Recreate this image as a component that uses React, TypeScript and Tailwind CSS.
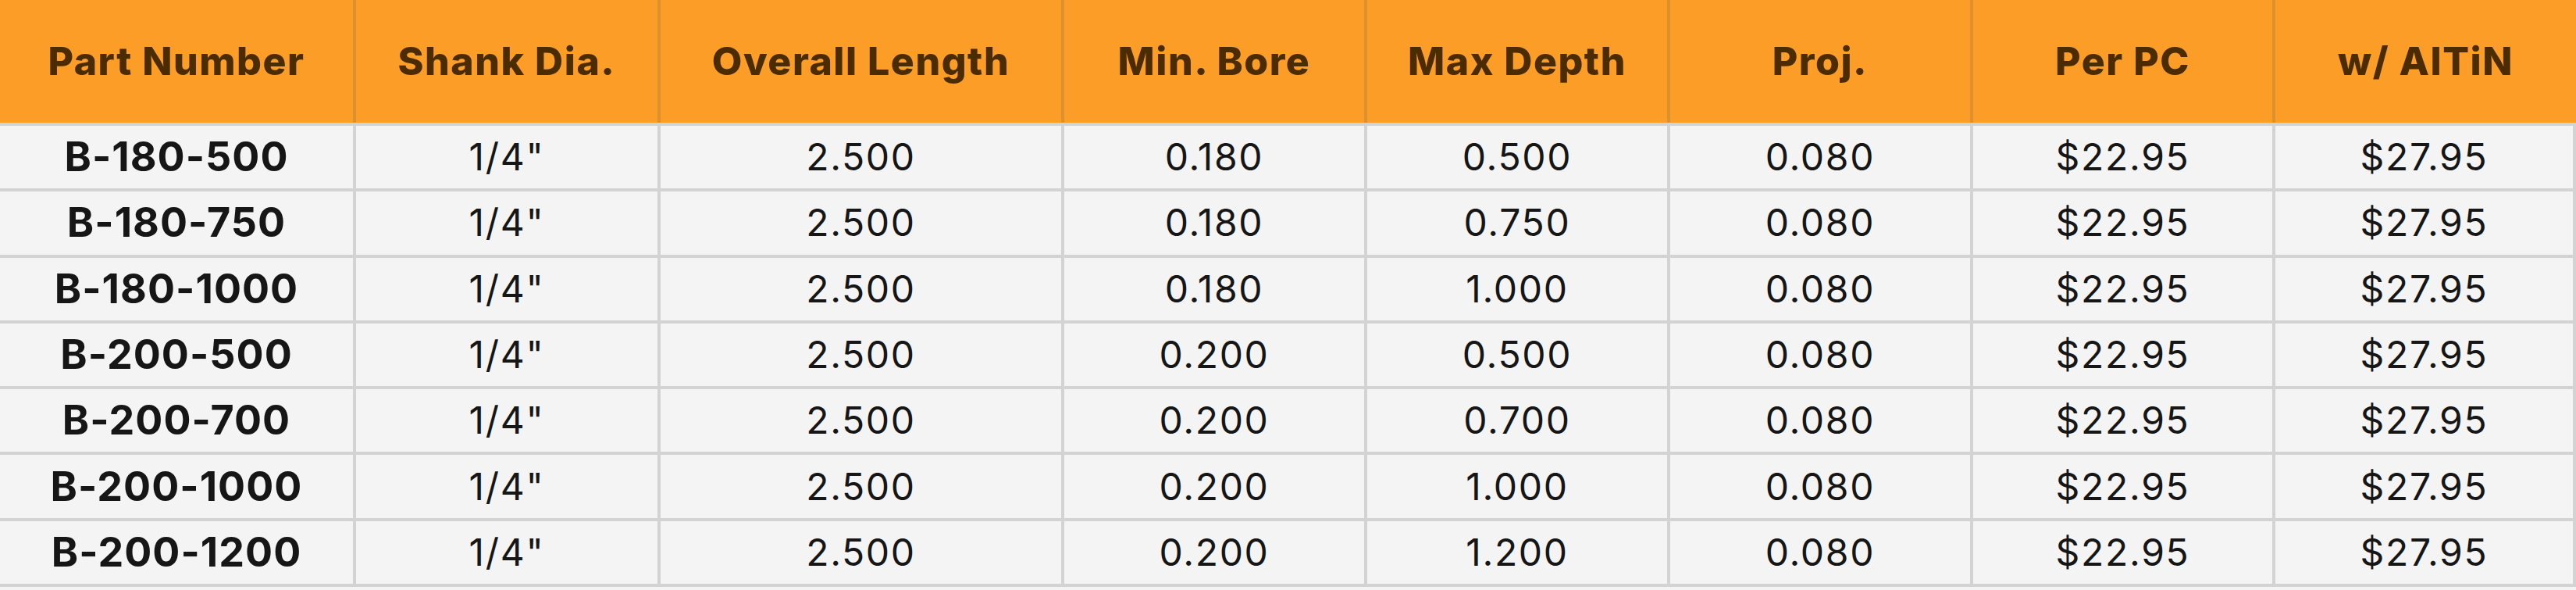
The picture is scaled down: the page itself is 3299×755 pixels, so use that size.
const columns = [
  'Part Number',
  'Shank Dia.',
  'Overall Length',
  'Min. Bore',
  'Max Depth',
  'Proj.',
  'Per PC',
  'w/ AlTiN'
];

const parts = [
  { part: 'B-180-500', bore: '0.180', depth: '0.500' },
  { part: 'B-180-750', bore: '0.180', depth: '0.750' },
  { part: 'B-180-1000', bore: '0.180', depth: '1.000' },
  { part: 'B-200-500', bore: '0.200', depth: '0.500' },
  { part: 'B-200-700', bore: '0.200', depth: '0.700' },
  { part: 'B-200-1000', bore: '0.200', depth: '1.000' },
  { part: 'B-200-1200', bore: '0.200', depth: '1.200' }
];

const gridCols =
  'grid grid-cols-[456px_390px_517px_388px_388px_388px_387px_385px]';

export default function App() {
  return (
    <div className="min-h-screen bg-[#f4f4f4] font-['Inter',sans-serif]">
      <div className="w-[3299px]">
        <div className={`${gridCols} h-[157px] bg-[#fc9d28]`}>
          {columns.map((label, i) => (
            <div
              key={label}
              className={`flex items-center justify-center text-[50px] font-extrabold tracking-[0.03em] text-[#4a2c00] ${
                i < columns.length - 1 ? 'border-r-4 border-[#de902d]' : ''
              }`}
            >
              {label}
            </div>
          ))}
        </div>

        <div className="border-b-4 border-[#d3d3d3]">
          {parts.map((row) => {
            const cells = [
              row.part,
              '1/4"',
              '2.500',
              row.bore,
              row.depth,
              '0.080',
              '$22.95',
              '$27.95'
            ];
            return (
              <div
                key={row.part}
                className={`${gridCols} h-[84.3px] border-t-4 border-[#d3d3d3] bg-[#f4f4f4]`}
              >
                {cells.map((value, i) => (
                  <div
                    key={i}
                    className={`flex items-center justify-center border-r-4 border-[#d3d3d3] text-[#161616] ${
                      i === 0
                        ? 'text-[52px] font-bold tracking-[0.02em]'
                        : 'text-[48px] font-normal tracking-[0.035em]'
                    }`}
                  >
                    {value}
                  </div>
                ))}
              </div>
            );
          })}
        </div>
      </div>
    </div>
  );
}
